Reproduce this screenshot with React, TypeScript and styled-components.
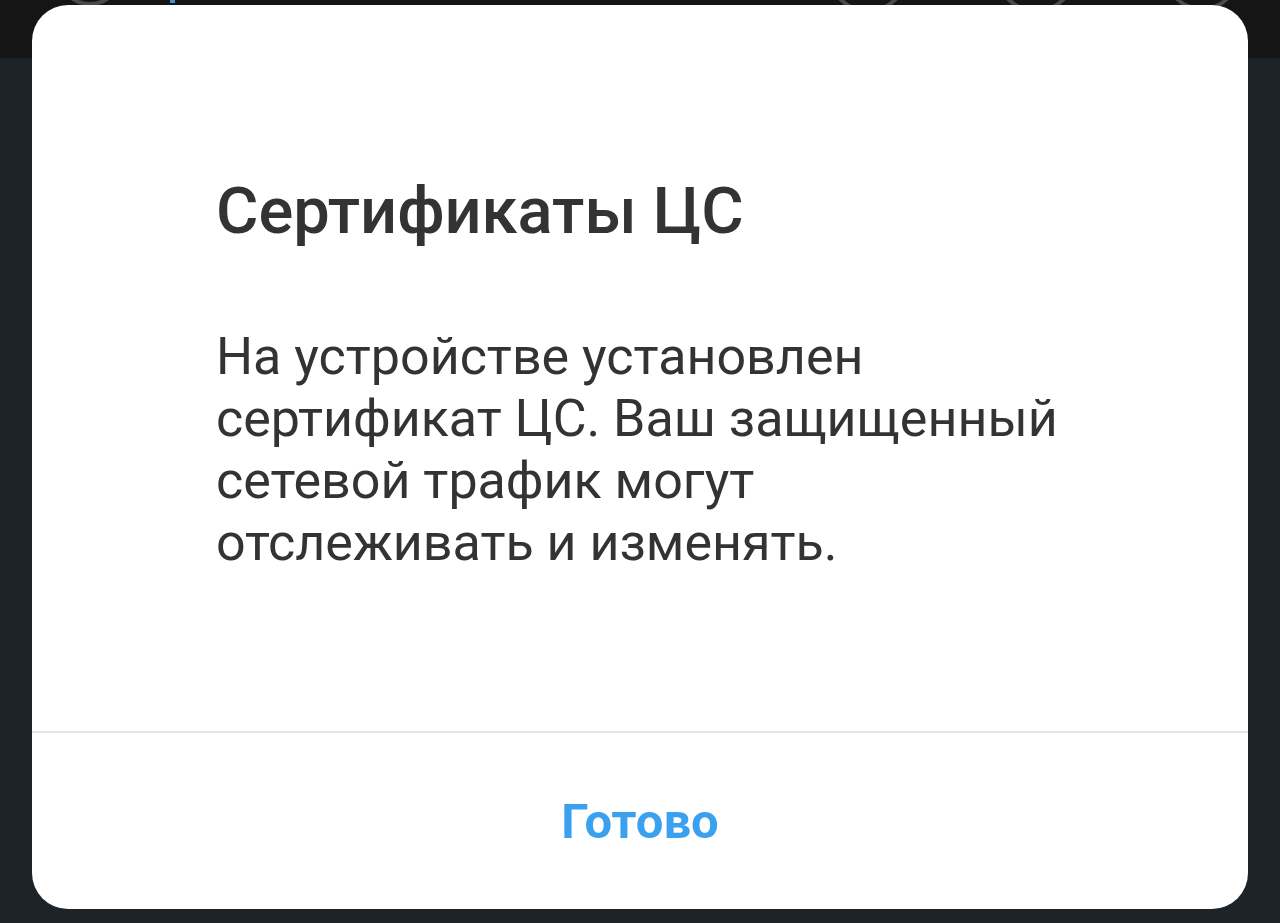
import styled, { createGlobalStyle } from 'styled-components';

const GlobalStyle = createGlobalStyle`
  html, body {
    margin: 0;
    padding: 0;
    width: 1280px;
    height: 923px;
    overflow: hidden;
    background: #1d2327;
    font-family: Roboto, "Noto Sans", "Liberation Sans", sans-serif;
  }
`;

const Screen = styled.div`
  position: relative;
  width: 1280px;
  height: 923px;
  background: #1d2327;
  overflow: hidden;
`;

// chat input bar behind the dialog, only its bottom edge peeks out
const TopBar = styled.div`
  height: 58px;
  background: #151515;
  overflow: hidden;
`;

const InputRow = styled.div`
  height: 70px;
  margin-top: -62px;
  padding: 0 40px 0 57px;
  display: flex;
  align-items: center;
`;

const GhostCircle = styled.div<{ $size: number }>`
  flex: none;
  width: ${(p) => p.$size}px;
  height: ${(p) => p.$size}px;
  border: 4px solid #4a4a4a;
  border-radius: 50%;
  box-sizing: border-box;
`;

const InputField = styled.div`
  flex: 1;
  display: flex;
  align-items: center;
  gap: 6px;
  margin-left: 47px;
`;

const Cursor = styled.div`
  width: 5px;
  height: 60px;
  background: #3d8fd6;
`;

const Placeholder = styled.span`
  font-size: 50px;
  line-height: 60px;
  color: #5a5a5a;
  white-space: nowrap;
`;

const IconGroup = styled.div`
  display: flex;
  align-items: center;
  gap: 88px;
`;

const Dialog = styled.div`
  position: absolute;
  top: 5px;
  left: 32px;
  width: 1216px;
  height: 904px;
  background: #ffffff;
  border-radius: 36px;
  display: flex;
  flex-direction: column;
  overflow: hidden;
`;

const Content = styled.div`
  height: 726px;
  padding: 164px 184px 0;
  box-sizing: border-box;
`;

const Title = styled.h1`
  margin: 0;
  font-size: 65px;
  line-height: 84px;
  font-weight: 500;
  color: #333333;
`;

const Message = styled.p`
  margin: 73px 0 0;
  font-size: 52px;
  line-height: 62px;
  font-weight: 400;
  color: #333333;
`;

const Divider = styled.div`
  height: 2px;
  background: #e3e3e3;
`;

const Actions = styled.div`
  flex: 1;
  display: flex;
  align-items: center;
  justify-content: center;
`;

const DoneButton = styled.button`
  border: none;
  background: none;
  padding: 0;
  font-family: inherit;
  font-size: 49px;
  font-weight: 700;
  color: #3aa0f0;
  cursor: pointer;
`;

export default function App() {
  return (
    <Screen>
      <GlobalStyle />
      <TopBar>
        <InputRow>
          <GhostCircle $size={66} />
          <InputField>
            <Cursor />
            <Placeholder>Сообщение</Placeholder>
          </InputField>
          <IconGroup>
            <GhostCircle $size={80} />
            <GhostCircle $size={80} />
            <GhostCircle $size={76} />
          </IconGroup>
        </InputRow>
      </TopBar>
      <Dialog>
        <Content>
          <Title>Сертификаты ЦС</Title>
          <Message>
            На устройстве установлен
            <br />
            сертификат ЦС. Ваш защищенный
            <br />
            сетевой трафик могут
            <br />
            отслеживать и изменять.
          </Message>
        </Content>
        <Divider />
        <Actions>
          <DoneButton>Готово</DoneButton>
        </Actions>
      </Dialog>
    </Screen>
  );
}
